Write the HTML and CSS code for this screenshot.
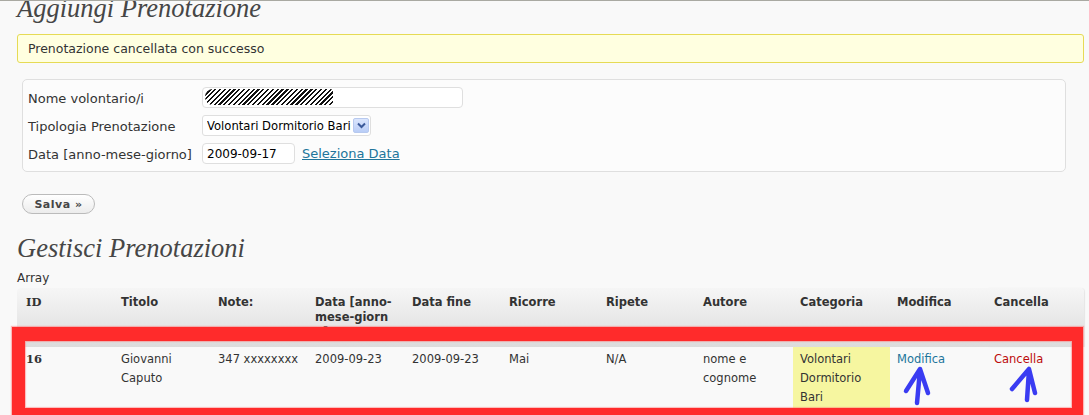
FILE: index.html
```html
<!DOCTYPE html>
<html lang="it">
<head>
    <meta charset="UTF-8">
    <title>Prenotazioni</title>
    <link rel="stylesheet" href="styles.css">
</head>
<body>
<div class="wrap">
    <h2 class="title first">Aggiungi Prenotazione</h2>

    <div class="notice">Prenotazione cancellata con successo</div>

    <!-- Form prenotazione -->
    <form class="booking">
        <label for="nome">Nome volontario/i</label>
        <div class="name-wrap">
            <input type="text" id="nome" class="text wide">
            <span class="scribble"></span>
        </div>

        <label for="tipo">Tipologia Prenotazione</label>
        <div class="select-wrap">
            <select id="tipo" class="select">
                <option>Volontari Dormitorio Bari</option>
            </select>
            <span class="select-btn">
                <svg width="9" height="7" viewBox="0 0 9 7"><path d="M1 1.5 L4.5 5 L8 1.5" fill="none" stroke="#3b5a9a" stroke-width="2"/></svg>
            </span>
        </div>

        <label for="data">Data [anno-mese-giorno]</label>
        <div class="date-row">
            <input type="text" id="data" class="text date" value="2009-09-17">
            <a href="#" class="pick">Seleziona Data</a>
        </div>
    </form>

    <button class="button" type="button">Salva &raquo;</button>

    <h2 class="title">Gestisci Prenotazioni</h2>
    <p class="dump">Array</p>

    <!-- Lista prenotazioni -->
    <div class="list-wrap">
        <table class="widefat">
            <thead>
                <tr>
                    <th class="id">ID</th>
                    <th>Titolo</th>
                    <th>Note:</th>
                    <th>Data [anno-<br>mese-giorn<br>o]</th>
                    <th>Data fine</th>
                    <th>Ricorre</th>
                    <th>Ripete</th>
                    <th>Autore</th>
                    <th>Categoria</th>
                    <th>Modifica</th>
                    <th>Cancella</th>
                </tr>
            </thead>
            <tbody>
                <tr>
                    <th class="id">16</th>
                    <td>Giovanni Caputo</td>
                    <td>347 xxxxxxxx</td>
                    <td>2009-09-23</td>
                    <td>2009-09-23</td>
                    <td>Mai</td>
                    <td>N/A</td>
                    <td>nome e cognome</td>
                    <td class="cat">Volontari Dormitorio Bari</td>
                    <td><a href="#" class="edit">Modifica</a></td>
                    <td><a href="#" class="delete">Cancella</a></td>
                </tr>
            </tbody>
        </table>

        <!-- evidenziazione -->
        <div class="highlight"></div>
        <svg class="arrows" width="1072" height="128" viewBox="0 0 1072 128">
            <g fill="none" stroke="#3a3cf2" stroke-width="4.5" stroke-linecap="round" stroke-linejoin="round">
                <path d="M900 115 L903 82 M889 103 L903 81 L911 105"/>
                <path d="M1010 112 L1012 82 M995 101 L1012 81 L1018 105"/>
            </g>
        </svg>
    </div>
</div>
</body>
</html>
```

FILE: styles.css
```css
:root {
    --link-color: #21759b;
    --border-color: #dfdfdf;
    --background-color: #f9f9f9;
}

body {
    margin: 0;
    border-top: 1px solid #a9a9a2;
    background-color: var(--background-color);
    font-family: "DejaVu Sans", Verdana, sans-serif;
    font-size: 12px;
    color: #333;
}

.wrap {
    overflow: hidden;
    padding: 0 5px 0 17px;
    height: 420px;
}

.title {
    font-family: "Liberation Serif", Georgia, serif;
    font-style: italic;
    font-weight: normal;
    font-size: 26.5px;
    line-height: 24px;
    color: #464646;
    margin: 22px 0 0;
}

.title.first {
    margin-top: -5px;
}

.notice {
    margin-top: 14px;
    height: 27px;
    line-height: 28px;
    padding-left: 10px;
    font-size: 12.5px;
    background: #ffffe0;
    border: 1px solid #e6db55;
    border-radius: 3px;
}

.booking {
    margin: 16px 18px 0 5px;
    padding: 7px 5px;
    background: #fcfcfc;
    border: 1px solid var(--border-color);
    border-radius: 5px;
    display: grid;
    grid-template-columns: 174px 1fr;
    row-gap: 7px;
    align-items: center;
}

.booking label {
    font-size: 13px;
    padding-top: 2px;
}

.text {
    box-sizing: border-box;
    margin: 0;
    border: 1px solid var(--border-color);
    border-radius: 4px;
    background: #fff;
    font-family: inherit;
    font-size: 12px;
    color: #000;
    padding: 0 4px;
}

.name-wrap {
    position: relative;
    width: 261px;
}

.wide {
    width: 261px;
    height: 21px;
    display: block;
}

.scribble {
    position: absolute;
    left: 3px;
    top: 2px;
    width: 128px;
    height: 16px;
    border-radius: 8px 3px 3px 8px;
    background: repeating-linear-gradient(135deg, #111 0 1.6px, #fff 1.6px 3.4px);
}

.select-wrap {
    position: relative;
    width: 169px;
    height: 21px;
}

.select {
    appearance: none;
    box-sizing: border-box;
    width: 169px;
    height: 21px;
    margin: 0;
    padding: 0 0 0 4px;
    border: 1px solid var(--border-color);
    border-radius: 3px;
    background: #fff;
    font-family: inherit;
    font-size: 11.6px;
    color: #000;
}

.select-btn {
    position: absolute;
    right: 2px;
    top: 3px;
    width: 16px;
    height: 15px;
    box-sizing: border-box;
    border: 1px solid #b7c9ef;
    border-radius: 2px;
    background: linear-gradient(#dbe6fd, #b9cdf7);
    display: flex;
    align-items: center;
    justify-content: center;
}

.date-row {
    display: flex;
    align-items: center;
    gap: 7px;
}

.date {
    width: 93px;
    height: 21px;
}

.pick {
    color: var(--link-color);
    font-size: 13px;
}

.button {
    margin: 22px 0 0 5px;
    width: 73px;
    height: 20px;
    padding: 0;
    border: 1px solid #bbb;
    border-radius: 11px;
    background: linear-gradient(#fff, #ececec);
    font-family: inherit;
    font-size: 11px;
    font-weight: bold;
    letter-spacing: 0.5px;
    color: #464646;
    cursor: pointer;
}

.dump {
    margin: 11px 0 0;
    line-height: 15px;
}

.list-wrap {
    position: relative;
    margin-top: 2px;
}

.widefat {
    width: 1067px;
    table-layout: fixed;
    border-collapse: collapse;
}

.widefat thead th {
    background: linear-gradient(#f6f6f6, #dcdcdc);
    height: 45px;
    padding: 7px 6px 7px 7px;
    text-align: left;
    vertical-align: top;
    font-size: 11.5px;
    line-height: 15px;
    color: #333;
}

.widefat thead th:first-child {
    border-top-left-radius: 4px;
}

.widefat thead th:last-child {
    border-top-right-radius: 4px;
    box-shadow: 1px 0 1px rgba(0,0,0,0.08);
}

.widefat td,
.widefat tbody th {
    padding: 3px 6px 3px 7px;
    vertical-align: top;
    text-align: left;
    font-size: 11.5px;
    line-height: 19px;
    height: 57px;
}

.widefat .id {
    font-family: "DejaVu Serif", Georgia, serif;
    padding-left: 9px;
}

.widefat .cat {
    background: #f6f6a0;
}

.edit {
    color: var(--link-color);
    text-decoration: none;
}

.delete {
    color: #bc0b0b;
    text-decoration: none;
}

.highlight {
    position: absolute;
    left: -5px;
    top: 39px;
    width: 1071px;
    height: 94px;
    box-sizing: border-box;
    border-style: solid;
    border-color: #ff2b2b;
    border-width: 14px 11px 13px 13px;
    box-shadow: 0 0 1px 1px rgba(255, 120, 120, 0.5), inset 0 0 1px 1px rgba(255, 120, 120, 0.5);
}

.arrows {
    position: absolute;
    left: 0;
    top: 0;
    pointer-events: none;
}
```
